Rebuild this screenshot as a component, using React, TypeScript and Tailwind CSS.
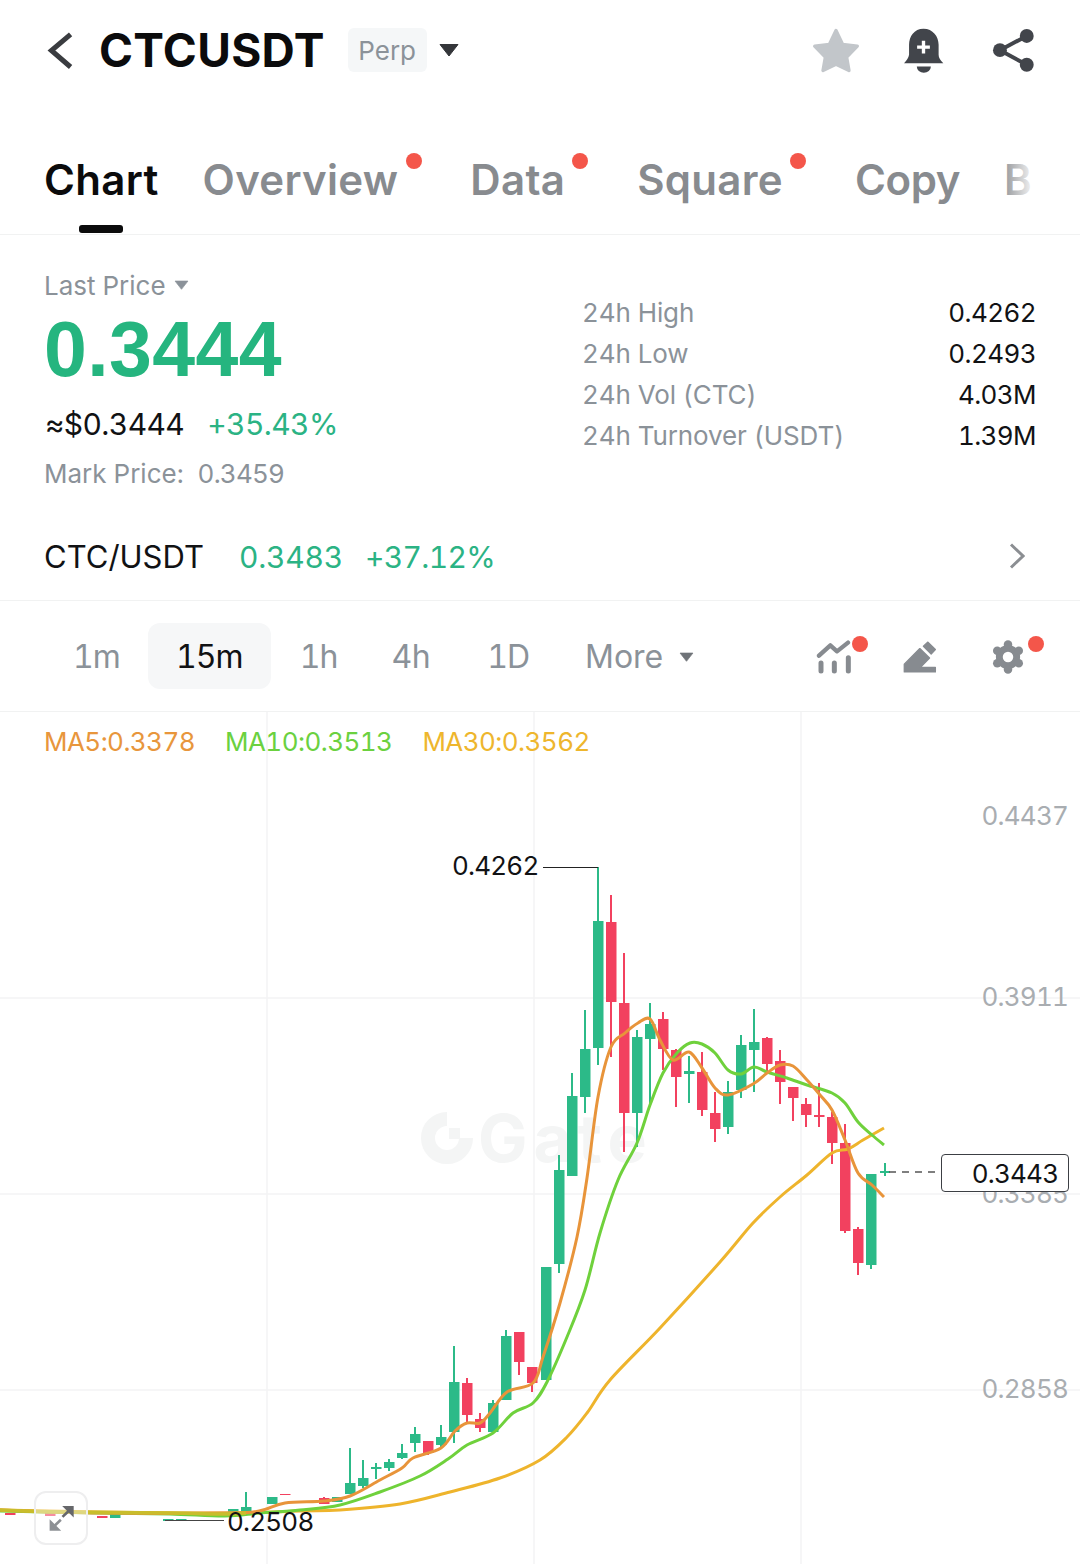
const FONT = "font-['Inter','Liberation_Sans',sans-serif]";

type Candle = [number, number, number, number, number, 'g' | 'r'];

// x, wick top, wick bottom, body top, body bottom, colour
const candles: Candle[] = [
  [10, 1513, 1515, 1513, 1515, 'r'],
  [50, 1513, 1516, 1513, 1516, 'r'],
  [102, 1516, 1518, 1516, 1518, 'r'],
  [115, 1514, 1518, 1514, 1518, 'g'],
  [168, 1519, 1521, 1519, 1521, 'g'],
  [181, 1519, 1521, 1519, 1521, 'g'],
  [233, 1509, 1514, 1509, 1514, 'g'],
  [246, 1492, 1514, 1507, 1514, 'g'],
  [272, 1497, 1504, 1497, 1504, 'g'],
  [285, 1494, 1495, 1494, 1495, 'r'],
  [324, 1497, 1504, 1498, 1504, 'r'],
  [337, 1497, 1502, 1497, 1502, 'g'],
  [350, 1448, 1494, 1483, 1494, 'g'],
  [363, 1460, 1488, 1478, 1486, 'g'],
  [376, 1463, 1479, 1467, 1469, 'g'],
  [389, 1459, 1471, 1462, 1468, 'g'],
  [402, 1444, 1459, 1453, 1458, 'g'],
  [415, 1427, 1452, 1434, 1443, 'g'],
  [428, 1441, 1455, 1441, 1453, 'r'],
  [441, 1425, 1447, 1437, 1445, 'g'],
  [454, 1346, 1443, 1382, 1432, 'g'],
  [467, 1378, 1423, 1383, 1415, 'r'],
  [480, 1413, 1432, 1419, 1428, 'r'],
  [493, 1400, 1432, 1403, 1432, 'g'],
  [506, 1330, 1400, 1336, 1400, 'g'],
  [519, 1332, 1375, 1332, 1362, 'r'],
  [532, 1367, 1392, 1367, 1383, 'r'],
  [546, 1267, 1380, 1267, 1380, 'g'],
  [559, 1155, 1273, 1170, 1264, 'g'],
  [572, 1073, 1176, 1096, 1176, 'g'],
  [585, 1010, 1113, 1049, 1097, 'g'],
  [598, 867, 1065, 921, 1048, 'g'],
  [611, 895, 1057, 922, 1002, 'r'],
  [624, 953, 1152, 1003, 1113, 'r'],
  [637, 1030, 1147, 1037, 1113, 'g'],
  [650, 1003, 1103, 1024, 1039, 'g'],
  [663, 1012, 1070, 1019, 1049, 'r'],
  [676, 1049, 1107, 1050, 1077, 'r'],
  [689, 1056, 1103, 1071, 1074, 'g'],
  [702, 1052, 1116, 1072, 1110, 'r'],
  [715, 1092, 1142, 1113, 1129, 'r'],
  [728, 1081, 1134, 1092, 1127, 'g'],
  [741, 1035, 1098, 1045, 1090, 'g'],
  [754, 1009, 1092, 1042, 1050, 'g'],
  [767, 1037, 1073, 1038, 1064, 'r'],
  [780, 1050, 1104, 1061, 1082, 'r'],
  [793, 1087, 1121, 1087, 1098, 'r'],
  [806, 1098, 1127, 1104, 1115, 'r'],
  [819, 1083, 1127, 1115, 1117, 'r'],
  [832, 1112, 1164, 1117, 1143, 'r'],
  [845, 1124, 1233, 1143, 1231, 'r'],
  [858, 1227, 1275, 1229, 1263, 'r'],
  [871, 1174, 1269, 1174, 1265, 'g'],
  [885, 1163, 1176, 1171, 1173, 'g'],
];

const ma5 =
  '0,1510 100,1513 225,1513 259,1511 285,1503 324,1501 350,1496 380,1480 402,1468 413,1458 441,1448 455,1431 467,1423 480,1423 490,1413 507,1392 533,1383 543,1357 560,1303 577,1237 587,1178 598,1097 611,1047 625,1033 638,1023 650,1019 660,1040 673,1060 689,1052 702,1068 715,1088 728,1095 753,1084 767,1073 780,1065 793,1066 807,1080 820,1095 832,1110 845,1140 858,1173 872,1185 884,1197';
const ma10 =
  '0,1511 100,1513 170,1514 225,1516 260,1513 300,1510 340,1505 380,1492 420,1476 448,1459 467,1445 493,1433 513,1413 533,1403 547,1382 567,1337 585,1290 600,1233 618,1180 637,1143 650,1105 663,1073 677,1053 690,1043 702,1044 715,1053 728,1070 741,1074 754,1067 767,1072 787,1078 807,1085 832,1093 845,1103 858,1122 872,1135 884,1145';
const ma30 =
  '0,1510 100,1512 225,1513 300,1511 340,1510 400,1504 450,1492 500,1478 540,1460 567,1437 587,1413 610,1380 660,1328 720,1262 753,1223 780,1197 807,1175 832,1153 848,1149 863,1140 884,1128';
// the three averages sit on top of each other here, which reads as olive
const flatBand = '0,1510 60,1512 170,1513 225,1514 246,1513';

// Catmull-Rom through the sampled points
function smooth(raw: string) {
  const p = raw.split(' ').map((s) => s.split(',').map(Number));
  let d = `M${p[0][0]} ${p[0][1]}`;
  for (let i = 0; i < p.length - 1; i++) {
    const a = p[Math.max(i - 1, 0)];
    const b = p[i];
    const c = p[i + 1];
    const e = p[Math.min(i + 2, p.length - 1)];
    d += `C${b[0] + (c[0] - a[0]) / 6} ${b[1] + (c[1] - a[1]) / 6} ${c[0] - (e[0] - b[0]) / 6} ${c[1] - (e[1] - b[1]) / 6} ${c[0]} ${c[1]}`;
  }
  return d;
}

function Dot({ className }: { className: string }) {
  return <span className={`absolute h-4 w-4 rounded-full bg-[#f4564a] ${className}`} />;
}

function Caret({ className }: { className: string }) {
  return (
    <svg viewBox="0 0 20 14" className={className} fill="currentColor">
      <path d="M1 1.5h18L10 13z" stroke="currentColor" strokeWidth="1" strokeLinejoin="round" />
    </svg>
  );
}

function Header() {
  return (
    <div className="flex h-[100px] items-center">
      <svg viewBox="135 90 80 116" className="ml-[47px] h-[39px] w-[27px] shrink-0 text-[#3a3c40]" fill="none" stroke="currentColor" strokeWidth="15">
        <path d="M205 100l-57 48 57 49" />
      </svg>
      <h1 className="ml-[25px] text-[46px] leading-none font-bold tracking-[0.3px] text-[#0b0b0c]">CTCUSDT</h1>
      <span className="ml-[23px] flex h-[44px] w-[79px] items-center justify-center rounded-md bg-[#f5f7f8] text-[26px] text-[#8b9299]">Perp</span>
      <Caret className="ml-[12px] h-[14px] w-[20px] text-[#34363a]" />
      <svg viewBox="92 78 150 140" className="ml-auto h-[47px] w-[50px] text-[#c2c6ca]" fill="currentColor" stroke="currentColor" strokeWidth="10" strokeLinejoin="round">
        <path d="M167 88l20 42 44 5-32 33 7 40-39-19-39 19 7-40-32-33 44-5z" />
      </svg>
      <svg viewBox="372 80 122 134" className="ml-[42px] h-[45px] w-[41px] text-[#42454b]" fill="currentColor">
        <path d="M433 82c-28 0-43 23-43 48v30q-2 12-15 25h117q-14-13-14-25v-30c0-25-17-48-45-48z" />
        <path d="M413 195h42a21 18 0 0 1-42 0z" />
        <path d="M428 118h10v14h14v10h-14v14h-10v-14h-14v-10h14z" fill="#fff" />
      </svg>
      <svg viewBox="636 80 130 136" className="mr-[45px] ml-[48px] h-[45px] w-[43px] text-[#42454b]" fill="currentColor" stroke="currentColor">
        <path d="M741 104l-81 43 81 44" fill="none" strokeWidth="12" />
        <circle cx="741" cy="104" r="21" stroke="none" />
        <circle cx="660" cy="147" r="21" stroke="none" />
        <circle cx="741" cy="191" r="21" stroke="none" />
      </svg>
    </div>
  );
}

function Tabs() {
  return (
    <div className="relative h-[135px] border-b border-[#f1f2f2]">
      <div className="flex gap-[46px] pt-[52px] pl-[44px] text-[42px] leading-[56px] font-semibold tracking-[0.3px] text-[#888b8f]">
        <span className="relative mr-[-2px] text-[#0b0b0c]">
          Chart
          <span className="absolute top-[73px] left-[35px] h-2 w-[44px] rounded-[3px] bg-[#0b0b0c]" />
        </span>
        <span className="relative pr-[26px]">Overview<Dot className="top-[1px] right-[2px]" /></span>
        <span className="relative pr-[26px]">Data<Dot className="top-[1px] right-[3px]" /></span>
        <span className="relative pr-[26px]">Square<Dot className="top-[1px] right-[3px]" /></span>
        <span className="mr-[-2px] tracking-[-0.4px]">Copy</span>
        <span>B</span>
      </div>
      <div className="absolute top-[40px] right-0 h-[80px] w-[80px] bg-gradient-to-r from-transparent to-white to-[45%]" />
    </div>
  );
}

function Stats() {
  const rows = [
    ['24h High', '0.4262'],
    ['24h Low', '0.2493'],
    ['24h Vol (CTC)', '4.03M'],
    ['24h Turnover (USDT)', '1.39M'],
  ];
  return (
    <div className="flex h-[276px] pl-[44px]">
      <div className="w-[538px]">
        <div className="mt-[32px] flex h-[36px] items-center text-[26px] text-[#8b9299]">
          Last Price
          <Caret className="ml-[8px] h-[10px] w-[15px]" />
        </div>
        <div className="mt-[8px] h-[84px] font-['Liberation_Sans',sans-serif] text-[77px] leading-[76px] font-bold tracking-[0.4px] text-[#25b57f]">0.3444</div>
        <div className="mt-[9px] flex items-center text-[30px] leading-[40px] tracking-[-0.6px]">
          <span className="ml-[1px] text-[#111214]">≈$0.3444</span>
          <span className="ml-[23px] text-[#2bb384]">+35.43%</span>
        </div>
        <div className="mt-[12px] text-[26px] leading-[36px] text-[#8b9299]">
          Mark Price:&nbsp; <span className="tracking-[-0.8px]">0.3459</span>
        </div>
      </div>
      <div className="mt-[57px] mr-[44px] flex-1">
        {rows.map(([label, value]) => (
          <div key={label} className="flex h-[41px] items-center justify-between text-[26px]">
            <span className="tracking-[-0.1px] text-[#8b9299]">{label}</span>
            <span className="tracking-[-0.6px] text-[#111214]">{value}</span>
          </div>
        ))}
      </div>
    </div>
  );
}

function PairRow() {
  return (
    <div className="flex h-[90px] items-center border-b border-[#f1f2f2] pt-[3px] pl-[44px]">
      <span className="text-[31px] text-[#111214]">CTC/USDT</span>
      <span className="ml-[35px] text-[30px] tracking-[-0.2px] text-[#2bb384]">0.3483</span>
      <span className="ml-[22px] text-[30px] tracking-[-0.7px] text-[#2bb384]">+37.12%</span>
      <svg viewBox="0 0 16 26" className="mr-[55px] mb-[3px] ml-auto h-[26px] w-[16px] text-[#8b8e92]" fill="none" stroke="currentColor" strokeWidth="3">
        <path d="M2 1.5L14 13 2 24.5" />
      </svg>
    </div>
  );
}

function Toolbar() {
  return (
    <div className="flex h-[111px] items-center border-b border-[#f1f2f2] pt-[2px] text-[32px] text-[#8b9299]">
      <span className="ml-[73px] tracking-[-1px]">1m</span>
      <span className="mb-[2px] ml-[28px] flex h-[66px] w-[123px] items-center justify-center rounded-xl bg-[#f6f7f8] pt-[2px] tracking-[-1px] text-[#111214]">15m</span>
      <span className="ml-[29px] tracking-[-1px]">1h</span>
      <span className="ml-[54px] tracking-[-0.5px]">4h</span>
      <span className="ml-[57px] tracking-[-1px]">1D</span>
      <span className="ml-[56px]">More</span>
      <Caret className="ml-[16px] h-[10px] w-[15px] text-[#6f7378]" />
      <div className="relative ml-[121px] h-[36px] w-[36px]">
        <svg viewBox="100 88 108 108" className="h-[36px] w-[36px] text-[#878b90]" fill="none" stroke="currentColor" strokeWidth="15" strokeLinecap="round" strokeLinejoin="round">
          <path d="M112 138l34-31 20 18 33-26" strokeWidth="13" />
          <path d="M118 160v24M158 160v24M200 144v40" />
        </svg>
        <Dot className="top-[-3px] right-[-17px]" />
      </div>
      <svg viewBox="365 88 108 104" className="ml-[51px] h-[34px] w-[35px] text-[#878b90]" fill="currentColor" stroke="currentColor" strokeWidth="4" strokeLinejoin="round">
        <path d="M372 186v-24l48-48 30 29-28 29h46v14z" />
        <path d="M431 107l14-13 23 23-13 14z" />
      </svg>
      <div className="relative ml-[54px] h-[36px] w-[36px]">
        <svg viewBox="632 86 104 108" className="h-[36px] w-[34px] text-[#878b90]" fill="currentColor">
          <circle cx="684" cy="140" r="37" />
          {[90, 30, -30, -90, -150, 150].map((deg) => (
            <circle
              key={deg}
              cx={684 + 38 * Math.cos((deg * Math.PI) / 180)}
              cy={140 + 38 * Math.sin((deg * Math.PI) / 180)}
              r="13"
            />
          ))}
          <circle cx="684" cy="140" r="16" fill="#fff" />
        </svg>
        <Dot className="top-[-3px] right-[-17px]" />
      </div>
    </div>
  );
}

function Chart() {
  return (
    <div className="relative h-[852px] overflow-hidden">
      <svg viewBox="0 712 1080 852" className="absolute inset-0 h-[852px] w-[1080px]" fill="none">
        <g stroke="#f4f4f5" strokeWidth="1.5">
          <path d="M0 998H1080M0 1194H1080M0 1390H1080" />
          <path d="M267 712V1564M534 712V1564M801 712V1564" />
        </g>
        <path d="M447 1119A19 19 0 1 0 466 1138" stroke="#f4f5f5" strokeWidth="14" />
        <rect x="449" y="1128" width="11" height="11" fill="#f4f5f5" />
        <text x="478" y="1162" fill="#f4f5f5" fontSize="66" fontWeight="700" fontFamily="Inter" letterSpacing="6">Gate</text>
        {candles.map(([x, hi, lo, top, bottom, c]) => (
          <g key={x} fill={c === 'g' ? '#2cba88' : '#f2415f'}>
            <rect x={x - 1} y={hi} width="2" height={lo - hi} />
            <rect x={x - 5} y={top} width={x === 885 ? 10 : 10.5} height={bottom - top} />
          </g>
        ))}
        <path d="M543 867.5H598" stroke="#222" strokeWidth="1.2" />
        <path d="M165 1520.5H224" stroke="#444" strokeWidth="1.2" />
        <path d="M889 1172H936" stroke="#555" strokeWidth="1.5" strokeDasharray="7 6" />
        <path d={smooth(ma30)} stroke="#eeb42c" strokeWidth="3" />
        <path d={smooth(ma10)} stroke="#6fd13c" strokeWidth="3" />
        <path d={smooth(ma5)} stroke="#e8943a" strokeWidth="3" />
        <path d={smooth(flatBand)} stroke="#c9bd2c" strokeWidth="3.5" />
      </svg>

      <div className="relative flex gap-[30px] pt-[14px] pl-[44px] text-[26px] leading-[32px] tracking-[-0.55px]">
        <span className="text-[#e8963c]">MA5:0.3378</span>
        <span className="text-[#6bd13f]">MA10:0.3513</span>
        <span className="text-[#eeb62d]">MA30:0.3562</span>
      </div>

      <span className="absolute top-[88px] right-[12px] text-[26px] leading-[32px] tracking-[-0.8px] text-[#a9adb1]">0.4437</span>
      <span className="absolute top-[269px] right-[12px] text-[26px] leading-[32px] tracking-[-0.8px] text-[#a9adb1]">0.3911</span>
      <span className="absolute top-[466px] right-[12px] text-[26px] leading-[32px] tracking-[-0.8px] text-[#a9adb1]">0.3385</span>
      <span className="absolute top-[661px] right-[12px] text-[26px] leading-[32px] tracking-[-0.8px] text-[#a9adb1]">0.2858</span>
      <span className="absolute top-[138px] left-[452px] text-[26px] leading-[32px] tracking-[-0.8px] text-[#111214]">0.4262</span>
      <span className="absolute top-[794px] left-[227px] text-[26px] leading-[32px] tracking-[-0.8px] text-[#111214]">0.2508</span>

      <span className="absolute top-[442px] left-[941px] flex h-[38px] w-[128px] items-center justify-center rounded-[4px] border border-[#3c3f44] bg-white pl-[20px] text-[26px] tracking-[-0.8px] text-[#111214]">
        0.3443
      </span>

      <div className="absolute top-[779px] left-[34px] flex h-[54px] w-[54px] items-center justify-center rounded-xl border-2 border-[#eeeeef] bg-white/40">
        <svg viewBox="140 372 82 82" className="h-[27px] w-[27px]" fill="none">
          <path d="M183 375h35v35z" fill="#66676a" />
          <path d="M206 387l-22 21" stroke="#66676a" strokeWidth="8" />
          <path d="M145 415v35h35z" fill="#8d9094" />
          <path d="M157 438l22-21" stroke="#8d9094" strokeWidth="8" />
        </svg>
      </div>
    </div>
  );
}

export default function App() {
  return (
    <div className={`h-[1564px] w-[1080px] overflow-hidden bg-white tabular-nums ${FONT}`}>
      <Header />
      <Tabs />
      <Stats />
      <PairRow />
      <Toolbar />
      <Chart />
    </div>
  );
}
